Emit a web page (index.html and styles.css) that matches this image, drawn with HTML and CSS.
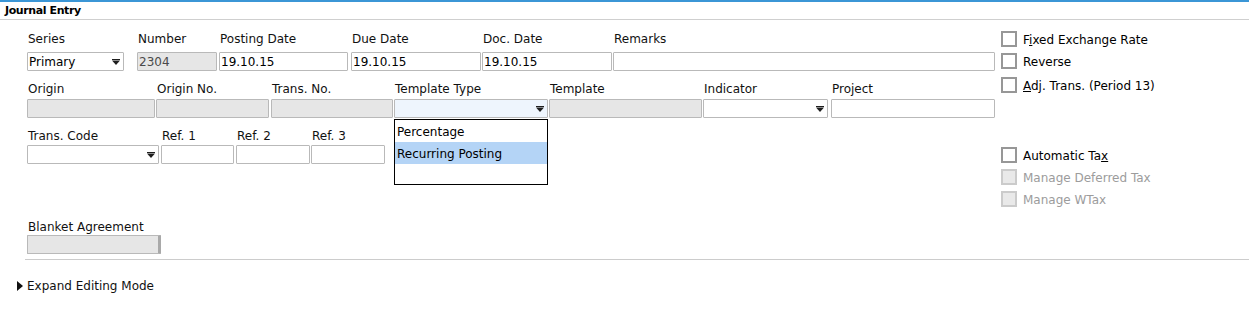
FILE: index.html
```html
<!DOCTYPE html>
<html lang="en">
<head>
    <meta charset="UTF-8">
    <title>Journal Entry</title>
    <link rel="stylesheet" href="styles.css">
</head>
<body>
    <div class="header">Journal Entry</div>

    <div class="main">
        <div class="fields">
            <div class="row row-1">
                <div class="field f-series">
                    <div class="label">Series</div>
                    <div class="box select"><span>Primary</span><svg class="arrow" width="8" height="6" viewBox="0 0 8 6"><rect x="0" y="0" width="8" height="1"/><polygon points="0,1.5 8,1.5 4,6"/></svg></div>
                </div>
                <div class="field f-number">
                    <div class="label">Number</div>
                    <div class="box disabled"><span>2304</span></div>
                </div>
                <div class="field f-posting">
                    <div class="label">Posting Date</div>
                    <div class="box"><span>19.10.15</span></div>
                </div>
                <div class="field f-due">
                    <div class="label">Due Date</div>
                    <div class="box"><span>19.10.15</span></div>
                </div>
                <div class="field f-doc">
                    <div class="label">Doc. Date</div>
                    <div class="box"><span>19.10.15</span></div>
                </div>
                <div class="field f-remarks">
                    <div class="label">Remarks</div>
                    <div class="box"></div>
                </div>
            </div>

            <div class="row row-2">
                <div class="field f-origin">
                    <div class="label">Origin</div>
                    <div class="box disabled"></div>
                </div>
                <div class="field f-originno">
                    <div class="label">Origin No.</div>
                    <div class="box disabled"></div>
                </div>
                <div class="field f-transno">
                    <div class="label">Trans. No.</div>
                    <div class="box disabled"></div>
                </div>
                <div class="field f-ttype">
                    <div class="label">Template Type</div>
                    <div class="box select focused"><span></span><svg class="arrow" width="8" height="6" viewBox="0 0 8 6"><rect x="0" y="0" width="8" height="1"/><polygon points="0,1.5 8,1.5 4,6"/></svg></div>
                    <div class="dropdown">
                        <div class="option">Percentage</div>
                        <div class="option selected">Recurring Posting</div>
                        <div class="option empty"></div>
                    </div>
                </div>
                <div class="field f-template">
                    <div class="label">Template</div>
                    <div class="box disabled"></div>
                </div>
                <div class="field f-indicator">
                    <div class="label">Indicator</div>
                    <div class="box select"><span></span><svg class="arrow" width="8" height="6" viewBox="0 0 8 6"><rect x="0" y="0" width="8" height="1"/><polygon points="0,1.5 8,1.5 4,6"/></svg></div>
                </div>
                <div class="field f-project">
                    <div class="label">Project</div>
                    <div class="box"></div>
                </div>
            </div>

            <div class="row row-3">
                <div class="field f-transcode">
                    <div class="label">Trans. Code</div>
                    <div class="box select"><span></span><svg class="arrow" width="8" height="6" viewBox="0 0 8 6"><rect x="0" y="0" width="8" height="1"/><polygon points="0,1.5 8,1.5 4,6"/></svg></div>
                </div>
                <div class="field f-ref1">
                    <div class="label">Ref. 1</div>
                    <div class="box"></div>
                </div>
                <div class="field f-ref2">
                    <div class="label">Ref. 2</div>
                    <div class="box"></div>
                </div>
                <div class="field f-ref3">
                    <div class="label">Ref. 3</div>
                    <div class="box"></div>
                </div>
            </div>

            <div class="row row-4">
                <div class="field f-blanket">
                    <div class="label">Blanket Agreement</div>
                    <div class="box disabled linked"></div>
                </div>
            </div>
        </div>

        <div class="options">
            <div class="check"><span class="tick"></span><span class="text">F<u>i</u>xed Exchange Rate</span></div>
            <div class="check"><span class="tick"></span><span class="text">Reverse</span></div>
            <div class="check check-adj"><span class="tick"></span><span class="text"><u>A</u>dj. Trans. (Period 13)</span></div>

            <div class="check check-tax"><span class="tick"></span><span class="text">Automatic Ta<u>x</u></span></div>
            <div class="check off"><span class="tick"></span><span class="text">Manage Deferred Tax</span></div>
            <div class="check off"><span class="tick"></span><span class="text">Manage WTax</span></div>
        </div>
    </div>

    <div class="separator"></div>

    <div class="expand">
        <svg width="6" height="10" viewBox="0 0 6 10"><polygon points="0,0 6,5 0,10"/></svg>
        <span>Expand Editing Mode</span>
    </div>
</body>
</html>
```

FILE: styles.css
```css
body {
    margin: 0;
    background: #ffffff;
    font-family: "DejaVu Sans", Verdana, sans-serif;
    font-size: 12px;
    color: #111;
}
.header {
    height: 17px;
    border-top: 2px solid #3b96d6;
    border-bottom: 1px solid #cfcfcf;
    padding-left: 5px;
    font-weight: bold;
    font-size: 11px;
    letter-spacing: -0.4px;
    line-height: 18px;
    color: #000;
}
.main {
    display: flex;
}
.fields {
    width: 995px;
    box-sizing: border-box;
    padding-left: 27px;
}
.row {
    display: flex;
}
.row-1 { margin-top: 10px; }
.row-2 { margin-top: 9px; }
.row-3 { margin-top: 9px; }
.row-4 { margin-top: 54px; }

.field {
    position: relative;
    display: flex;
    flex-direction: column;
}
.label {
    height: 15px;
    padding-top: 1px;
    line-height: 16px;
    padding-left: 1px;
    white-space: nowrap;
}
.row-1 .label { margin-bottom: 6px; }
.row-2 .label { margin-bottom: 3px; }
.row-3 .label { margin-bottom: 2px; }
.row-4 .label { margin-bottom: 1px; }

.box {
    position: relative;
    height: 19px;
    box-sizing: border-box;
    border: 1px solid #b9b9b9;
    border-radius: 1px;
    background: #fff;
    line-height: 19px;
    padding-left: 1px;
    color: #000;
}
.box.disabled {
    background: #e6e6e6;
    color: #4a4a4a;
}
.box.focused {
    background: #eef5fd;
}
.box.linked {
    border-right: 3px solid #a9a9a9;
}
.arrow {
    position: absolute;
    right: 3px;
    top: 6px;
    fill: #1e1e1e;
}

.f-series { width: 97px; }
.f-number { width: 80px; margin-left: 13px; }
.f-posting { width: 129px; margin-left: 2px; }
.f-due { width: 130px; margin-left: 3px; }
.f-doc { width: 130px; margin-left: 1px; }
.f-remarks { width: 382px; margin-left: 1px; }

.f-origin { width: 128px; }
.f-originno { width: 113px; margin-left: 1px; }
.f-transno { width: 122px; margin-left: 2px; }
.f-ttype { width: 154px; margin-left: 1px; }
.f-template { width: 153px; margin-left: 1px; }
.f-indicator { width: 125px; margin-left: 1px; }
.f-project { width: 164px; margin-left: 3px; }

.f-transcode { width: 132px; }
.f-ref1 { width: 73px; margin-left: 2px; }
.f-ref2 { width: 74px; margin-left: 2px; }
.f-ref3 { width: 74px; margin-left: 1px; }

.f-blanket { width: 134px; }

.dropdown {
    position: absolute;
    left: 0;
    top: 39px;
    width: 154px;
    box-sizing: border-box;
    border: 1px solid #000;
    background: #fff;
    z-index: 2;
}
.option {
    height: 22px;
    line-height: 24px;
    padding-left: 2px;
    color: #000;
}
.option.selected {
    background: #b4d4f6;
}
.option.empty {
    height: 20px;
}

.options {
    margin-left: 6px;
    padding-top: 8px;
}
.check {
    display: flex;
    align-items: center;
    height: 22px;
    white-space: nowrap;
    color: #000;
}
.check .text {
    padding-top: 2px;
}
.check-adj { margin-top: 2px; }
.check-tax { margin-top: 48px; }
.tick {
    width: 16px;
    height: 16px;
    box-sizing: border-box;
    border: 2px solid #979797;
    background: #fff;
    margin-right: 6px;
}
.check.off {
    color: #9c9c9c;
}
.check.off .tick {
    border-color: #cbcbcb;
    background: #e9e9e9;
}

.separator {
    margin: 5px 0 0 25px;
    height: 1px;
    background: #cccccc;
}
.expand {
    display: flex;
    align-items: center;
    margin-top: 18px;
    padding-left: 17px;
    height: 16px;
    line-height: 16px;
}
.expand svg {
    fill: #111;
    margin-right: 4px;
}
```
